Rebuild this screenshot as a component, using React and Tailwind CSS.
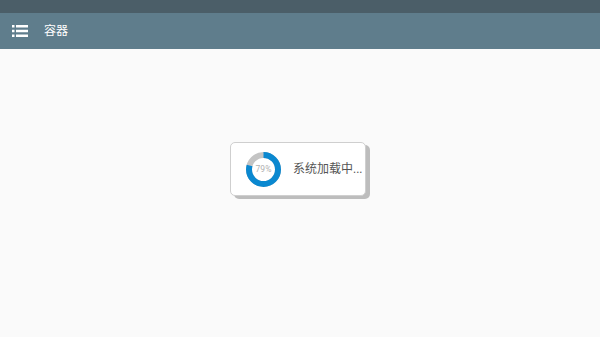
// Pantalla de carga: barra superior con menú y diálogo de progreso centrado.
const PCT = 79;

function ListIcon() {
  return (
    <svg width="16" height="12" viewBox="0 0 16 12" className="shrink-0">
      <rect x="0" y="0" width="2.5" height="2.5" fill="#fff" />
      <rect x="4" y="0" width="12" height="2.5" fill="#fff" />
      <rect x="0" y="4.75" width="2.5" height="2.5" fill="#fff" />
      <rect x="4" y="4.75" width="12" height="2.5" fill="#fff" />
      <rect x="0" y="9.5" width="2.5" height="2.5" fill="#fff" />
      <rect x="4" y="9.5" width="12" height="2.5" fill="#fff" />
    </svg>
  );
}

function Ring({ pct }) {
  const r = 14.5;
  const c = 2 * Math.PI * r;
  return (
    <div className="relative h-[35px] w-[35px] shrink-0">
      <svg width="35" height="35" viewBox="0 0 35 35" className="-rotate-90">
        <circle cx="17.5" cy="17.5" r={r} fill="none" stroke="#c4c4c4" strokeWidth="6" />
        <circle cx="17.5" cy="17.5" r={r} fill="none" stroke="#0a88d0" strokeWidth="6"
          strokeDasharray={`${(c * pct) / 100} ${c}`} />
      </svg>
      <span className="absolute inset-0 flex items-center justify-center text-[8.5px] text-[#b0b0b0]">{pct}%</span>
    </div>
  );
}

export default function App() {
  return (
    <div className="flex h-[337px] w-[600px] flex-col overflow-hidden bg-[#fafafa] font-['Roboto','Noto_Sans_CJK_SC',sans-serif]">
      <div className="h-[13px] shrink-0 bg-[#4b5e68]" />
      <div className="flex h-[36px] shrink-0 items-center gap-4 bg-[#5f7d8c] pl-3">
        <ListIcon />
        <span className="text-[12px] text-white">容器</span>
      </div>
      <div className="flex flex-1 items-start justify-center pt-[93px]">
        <div className="mr-[4px] flex h-[54px] w-[136px] items-center gap-[12px] rounded-[5px] border border-[#cfcfcf] bg-white pl-[15px] shadow-[4px_3px_0_#bdbdbd]">
          <Ring pct={PCT} />
          <span className="text-[12px] text-[#555]">系统加载中...</span>
        </div>
      </div>
    </div>
  );
}
